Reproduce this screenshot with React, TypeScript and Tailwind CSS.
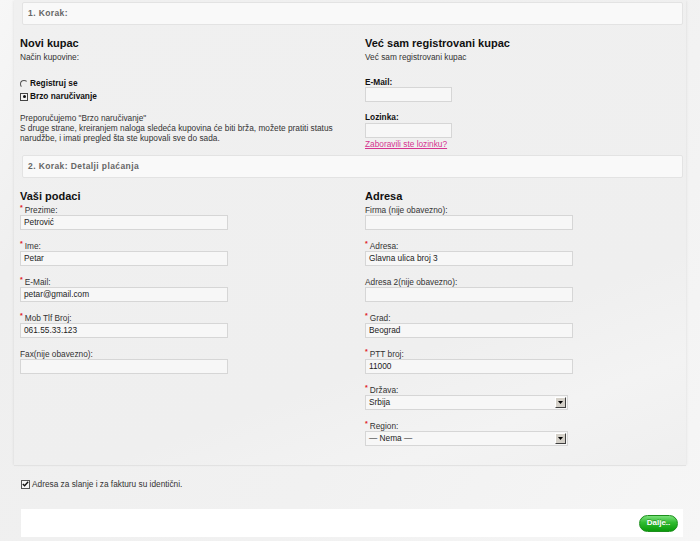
import React from "react";

const font = { fontFamily: '"Liberation Sans", Arial, sans-serif' };

function SectionHeader({ text }: { text: string }) {
  return (
    <div className="ml-[2px] mr-[3px] h-[23px] flex items-center pl-[5px] bg-[#f9f9f9] border border-[#e3e3e3] rounded-[2px]">
      <span className="text-[8.5px] font-bold text-[#666] tracking-[0.4px] leading-none">{text}</span>
    </div>
  );
}

function Label({ text, req }: { text: string; req?: boolean }) {
  return (
    <div className="h-[10px] leading-[10px] text-[8.3px] text-[#333] flex items-start">
      {req && <span className="text-[#e01b1b] text-[7px] font-bold leading-[8px] mr-[2px] mt-[-1px]">*</span>}
      <span>{text}</span>
    </div>
  );
}

function Input({ value, w = 208 }: { value?: string; w?: number }) {
  return (
    <div
      className="h-[15px] border border-[#d6d6d6] bg-[#f7f7f7] text-[8.3px] text-[#222] leading-[13px] pl-[3px]"
      style={{ width: w }}
    >
      {value}
    </div>
  );
}

function Field({ label, value, req, last }: { label: string; value?: string; req?: boolean; last?: boolean }) {
  return (
    <div className={last ? "" : "mb-[11px]"}>
      <Label text={label} req={req} />
      <Input value={value} />
    </div>
  );
}

function Select({ label, value, last }: { label: string; value: string; last?: boolean }) {
  return (
    <div className={last ? "" : "mb-[11px]"}>
      <Label text={label} req />
      <div className="w-[203px] h-[15px] border border-[#d6d6d6] bg-[#f7f7f7] flex items-center justify-between">
        <span className="text-[8.3px] text-[#222] pl-[3px] leading-none">{value}</span>
        <span className="w-[11px] h-[11px] mr-[1px] bg-[#d4d0c8] border-t border-l border-t-white border-l-white border-b border-r border-b-[#404040] border-r-[#404040] flex items-center justify-center">
          <svg width="5" height="3" viewBox="0 0 5 3">
            <polygon points="0,0 5,0 2.5,3" fill="#000" />
          </svg>
        </span>
      </div>
    </div>
  );
}

export default function App() {
  return (
    <div
      className="w-[700px] h-[541px] overflow-hidden bg-[#f2f2f2] bg-[linear-gradient(125deg,#f7f7f7_0%,#efefef_18%,#f1f1f1_60%,#f6f6f6_100%)]"
      style={font}
    >
      <div className="ml-[14px] w-[672px] pl-[6px] pt-[2px] pb-[19px] bg-[linear-gradient(160deg,#f0f0f0_0%,#efefef_70%,#f3f3f3_85%,#efefef_100%)] border-b border-[#e2e2e2] shadow-[-2px_0_2px_-1px_rgba(0,0,0,0.06),2px_0_2px_-1px_rgba(0,0,0,0.06)]">
        <SectionHeader text="1. Korak:" />

        <div className="grid grid-cols-[345px_1fr]">
          <div>
            <div className="mt-[11px] h-[14px] leading-[14px] text-[11px] font-bold text-[#111]">Novi kupac</div>
            <div className="mt-[2px] h-[10px] leading-[10px] text-[8.3px] text-[#333]">Način kupovine:</div>
            <div className="mt-[15px] h-[13px] flex items-center text-[8.3px] font-bold text-[#111]">
              <span className="w-[8px] h-[8px] rounded-full border border-[#555] border-r-transparent border-b-transparent mr-[2px]" />
              Registruj se
            </div>
            <div className="h-[13px] flex items-center text-[8.3px] font-bold text-[#111]">
              <span className="w-[8px] h-[8px] border border-[#444] bg-[#f4f4f4] flex items-center justify-center mr-[2px]">
                <span className="w-[3px] h-[3px] rounded-full bg-[#111]" />
              </span>
              Brzo naručivanje
            </div>
            <div className="mt-[10px] text-[8.3px] leading-[10px] text-[#333]">
              <div>Preporučujemo "Brzo naručivanje"</div>
              <div>S druge strane, kreiranjem naloga sledeća kupovina će biti brža, možete pratiti status</div>
              <div>narudžbe, i imati pregled šta ste kupovali sve do sada.</div>
            </div>
          </div>
          <div>
            <div className="mt-[11px] h-[14px] leading-[14px] text-[11px] font-bold text-[#111]">Već sam registrovani kupac</div>
            <div className="mt-[2px] h-[10px] leading-[10px] text-[8.3px] text-[#333]">Već sam registrovani kupac</div>
            <div className="mt-[15px] h-[10px] leading-[10px] text-[8.3px] font-bold text-[#111]">E-Mail:</div>
            <Input w={87} />
            <div className="mt-[10px] h-[11px] leading-[11px] text-[8.3px] font-bold text-[#111]">Lozinka:</div>
            <Input w={87} />
            <div className="mt-[1px] h-[10px] leading-[10px] text-[8.3px] text-[#d6338f] underline">Zaboravili ste lozinku?</div>
          </div>
        </div>

        <div className="mt-[6px]">
          <SectionHeader text="2. Korak: Detalji plaćanja" />
        </div>

        <div className="grid grid-cols-[345px_1fr]">
          <div>
            <div className="mt-[11px] mb-[2px] h-[14px] leading-[14px] text-[11px] font-bold text-[#111]">Vaši podaci</div>
            <Field label="Prezime:" value="Petrović" req />
            <Field label="Ime:" value="Petar" req />
            <Field label="E-Mail:" value="petar@gmail.com" req />
            <Field label="Mob Tlf Broj:" value="061.55.33.123" req />
            <Field label="Fax(nije obavezno):" last />
          </div>
          <div>
            <div className="mt-[11px] mb-[2px] h-[14px] leading-[14px] text-[11px] font-bold text-[#111]">Adresa</div>
            <Field label="Firma (nije obavezno):" />
            <Field label="Adresa:" value="Glavna ulica broj 3" req />
            <Field label="Adresa 2(nije obavezno):" />
            <Field label="Grad:" value="Beograd" req />
            <Field label="PTT broj:" value="11000" req />
            <Select label="Država:" value="Srbija" />
            <Select label="Region:" value="— Nema —" last />
          </div>
        </div>
      </div>

      <div className="ml-[21px] mt-[13px] h-[10px] flex items-center text-[8.3px] text-[#333]">
        <span className="w-[9px] h-[9px] border border-[#555] bg-[#f6f6f6] flex items-center justify-center mr-[2px]">
          <svg width="7" height="6" viewBox="0 0 7 6">
            <polyline points="0.8,3 2.6,4.8 6.2,0.8" fill="none" stroke="#111" strokeWidth="1.4" />
          </svg>
        </span>
        Adresa za slanje i za fakturu su identični.
      </div>

      <div className="ml-[21px] mt-[20px] w-[662px] h-[28px] bg-white flex items-center justify-end pr-[5px]">
        <div className="w-[39px] h-[17px] rounded-full bg-[linear-gradient(180deg,#7ae07a_0%,#2fbb2f_45%,#0b9a0b_100%)] border border-[#1c8f1c] flex items-center justify-center">
          <span className="text-[8px] font-bold text-white leading-none [text-shadow:0_-1px_0_rgba(0,0,0,0.25)]">Dalje..</span>
        </div>
      </div>
    </div>
  );
}
